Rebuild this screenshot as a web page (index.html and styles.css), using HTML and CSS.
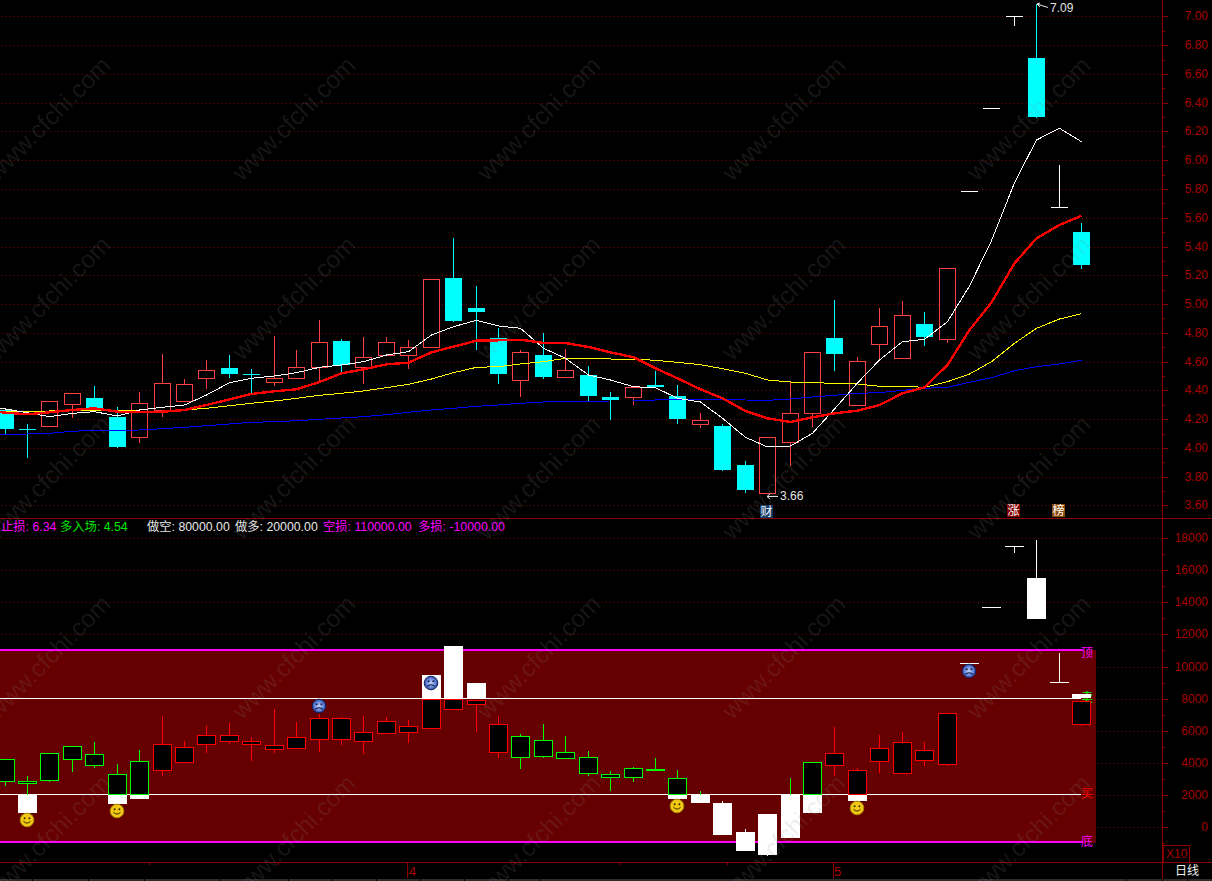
FILE: index.html
```html
<!DOCTYPE html>
<html lang="zh">
<head>
<meta charset="utf-8">
<title>K线</title>
<link rel="stylesheet" href="styles.css">
</head>
<body>
<main class="terminal">
  <section class="pane pane-main">
    <svg id="main" width="1212" height="519" viewBox="0 0 1212 519"></svg>
  </section>
  <section class="pane pane-sub">
    <svg id="sub" width="1212" height="343" viewBox="0 519 1212 343"></svg>
    <div class="info">
      <span class="item mag one">止损: 6.34</span>
      <span class="item grn two">多入场: 4.54</span>
      <span class="item wht three">做空: 80000.00</span>
      <span class="item wht four">做多: 20000.00</span>
      <span class="item mag five">空损: 110000.00</span>
      <span class="item mag six">多损: -10000.00</span>
    </div>
  </section>
  <footer class="datebar">
    <svg id="dates" width="1212" height="19" viewBox="0 862 1212 19"></svg>
  </footer>
  <svg id="mark" class="watermark" width="1212" height="881" viewBox="0 0 1212 881"></svg>
</main>
<script src="chart.js"></script>
</body>
</html>
```
FILE: styles.css
```css
* { box-sizing: border-box; }
html, body { margin: 0; padding: 0; background: #000; overflow: hidden; }
body { font-family: "Liberation Sans", "Noto Sans CJK SC", sans-serif; font-size: 12px; }
.terminal { position: relative; width: 1212px; height: 881px; display: flex; flex-direction: column; background: #000; }
.pane, .datebar { display: block; line-height: 0; }
svg { display: block; }
svg text { font-family: "Liberation Sans", "Noto Sans CJK SC", sans-serif; font-size: 12px; }

.info { position: absolute; left: 0; top: 0; display: flex; font-size: 12.3px; line-height: 14px; white-space: nowrap; padding: 1px 0 0 1px; }
.pane-sub { position: relative; }
.item.one { width: 59px; }
.item.two { width: 87px; }
.item.three { width: 88px; }
.item.four { width: 88px; }
.item.five { width: 95px; }
.mag { color: #ff00ff; }
.grn { color: #00e800; }
.wht { color: #e8e8e8; }

.watermark { position: absolute; left: 0; top: 0; pointer-events: none; }
.watermark text { font-size: 24.6px; fill: #8c8c8c; fill-opacity: .17; text-anchor: middle; dominant-baseline: middle; }

.grid { stroke: #800000; stroke-width: 1; stroke-dasharray: 1 3; fill: none; shape-rendering: crispEdges; }
.axis { stroke: #8c0000; stroke-width: 1; fill: none; shape-rendering: crispEdges; }
.axis-fill { fill: #8c0000; }
.axis-label { fill: #a80000; text-anchor: end; }
svg text.date { fill: #a80000; font-size: 13px; }
.x10-box { fill: none; stroke: #8c0000; stroke-width: 1; shape-rendering: crispEdges; }
.x10 { fill: #a80000; }
.day { fill: #f0f0f0; }
.strip { fill: #2c2c2c; }
.strip-sep { fill: #000; }

.wick-up { stroke: #ff4040; stroke-width: 1; shape-rendering: crispEdges; }
.body-up { fill: #000; stroke: #ff4040; stroke-width: 1; shape-rendering: crispEdges; }
.wick-dn { stroke: #00ffff; stroke-width: 1; shape-rendering: crispEdges; }
.body-dn { fill: #00ffff; shape-rendering: crispEdges; }
.wick-wht { stroke: #fff; stroke-width: 1; shape-rendering: crispEdges; }

.sub-red { stroke: #ff0000; stroke-width: 1; shape-rendering: crispEdges; }
.sub-red-body { fill: #000; stroke: #ff0000; stroke-width: 1; shape-rendering: crispEdges; }
.sub-grn { stroke: #00ff00; stroke-width: 1; shape-rendering: crispEdges; }
.sub-grn-body { fill: #000; stroke: #00ff00; stroke-width: 1; shape-rendering: crispEdges; }
.sub-wht { fill: #fff; shape-rendering: crispEdges; }

.ma { fill: none; stroke-linejoin: round; shape-rendering: crispEdges; }
.ma-white { stroke: #fff; stroke-width: 1; }
.ma-yellow { stroke: #ffff00; stroke-width: 1; }
.ma-blue { stroke: #0000ff; stroke-width: 1; }
.ma-red { stroke: #ff0000; stroke-width: 2.4; }

.price-tag { fill: #e4e4e4; }
.price-arrow { stroke: #e4e4e4; stroke-width: 1; fill: none; }

.flag-bg-blue { fill: #0e3a66; }
.flag-bg-red { fill: #840000; }
.flag-bg-orange { fill: #8a4a08; }
.flag-text { fill: #fff; text-anchor: middle; }

.band { fill: #660000; shape-rendering: crispEdges; }
.band-edge { fill: #ff00ff; shape-rendering: crispEdges; }
.band-mid { fill: #fff; shape-rendering: crispEdges; }
.band-label { text-anchor: middle; }
.l-mag { fill: #ff00ff; }
.l-red { fill: #ff0000; }
.l-grn { fill: #00ff00; }

.face-y { fill: #f2c814; stroke: #a88a08; stroke-width: 1; }
.face-b { fill: url(#blueface); stroke: #14245c; stroke-width: 1; }
.face-line { fill: none; stroke: #3a2c00; stroke-width: 1; }
.face-line-b { fill: none; stroke: #0c1a44; stroke-width: 1.1; }
.face-eye { fill: #3a2c00; }
.face-eye-b { fill: #0c1a44; }
```
FILE: chart.js
```js
var cols = [5,27,49,72,94,117,139,162,184,206,229,251,274,296,319,341,363,386,408,431,453,476,498,520,543,565,588,610,633,655,677,700,722,745,767,790,812,834,857,879,902,924,947,969,991,1014,1036,1059,1081];

// type, high, body top, body bottom, low
var upper = [
['d',410,410,428.7,432.7],['d',423,429,429.5,457],['u',401,401,426,426],['u',392,393,404,417],
['d',385,398,407.7,410],['d',406,417,446.7,446.7],['u',391,403,437,442],['u',353,383,410,416],
['u',378,384,400.5,400.5],['u',359,370,378,388],['d',354,368,373.7,377],['d',368,374,375,393],
['u',335,377.5,381.5,385],['u',349,367,378,378],['u',319,342,367,382],['d',338,341,365,372],
['u',336,357,367,383],['u',336,342,355,355],['u',339,347,354.5,368],['u',279,279,347,347],
['d',237,278,320.7,320.7],['d',285,308,312,349],['d',327,338,373.7,383],['u',349,352,380,396],
['d',332,355,376.7,378],['u',348,370,377,377],['d',365,375,395.7,400],['d',391,397,400,419],
['u',387,387,397,404],['d',370,385,387,387],['d',384,396,418.7,423],['u',412,420,424,427],
['d',423,426,469.7,469.7],['d',460,465,489.7,492],['u',437,437,493,493],['u',381,413,442,465],
['u',352,352,413,425.5],['d',299,338,353.7,370],['u',356,361,404.5,404.5],['u',307,326,344,360],
['u',300,315,358,358],['d',311,324,336.7,345],['u',268,268,339,341.7],
['w',191,191,191,191],['w',108,108,108,108],['w',16,16,16,25],
['d',3,58,116.7,116.7],['w',164,207,207,207],['d',222,232,264.7,268]
];

var white = [408,409,412.7,416.7,413.3,411.7,416,410,407.3,405,395,382.7,378.3,376,372.7,367.3,365,361.7,355,351.7,335,326.7,320.3,326,328.3,348.3,358.3,375,380,386.7,387.7,398.3,402,418.3,437.3,447,446,433.3,409,383,360,341.7,339.3,321.7,286,240.7,182.7,140,128.3,141.7];
var red = [412,412.7,414.3,412.3,410,408.3,411.7,412.3,411.7,410,405,399.3,394,391.3,389.3,382,373.3,369.3,364.3,362.7,352.3,346.7,340.7,340.3,339.7,343,343,347,352.3,357.3,368.3,378.3,389.3,398.3,411,418.3,422,417.3,413.3,410.7,405,393.3,387.3,365,330,302.5,263.3,238.3,225,215.7];
var yellow = [411.5,411.5,411.7,411,410.5,410.3,410.3,411,411,410,408.3,405.7,403.3,401,398.3,395.3,393.3,391,387.7,384.3,379,372.7,367.3,366.7,364,361.7,358.3,358.3,359,359,360.3,362.3,364.7,368.7,373.3,380,382,382.7,383.3,384,386.3,386.3,387.3,381.7,374,361.7,343.3,328.3,319,313.7];
var blue = [434.3,434.3,434,433.3,431.3,430.3,430.3,430,428.7,427.3,425.7,424,422.3,421.7,420.7,419.3,418,416.7,414.7,412.3,410,408.3,406.3,405,403.3,402,401.3,401.3,401,401,400,399.7,399.3,399.3,400,400.3,399,397,395.3,393.3,392.7,390.3,388.3,387.3,382.3,377.7,370.7,366.7,364,360.3];

// colour, high, body top, body bottom, low; white block top/bottom
var lower = [
['g',759,759,780.5,785],['g',775,781,783,794],['g',753,753,779.5,781],['g',745,746,758.5,771],
['g',741,754,764.5,767],['g',763,774,794,794],['g',749,761,794,794],['r',715,744,769.5,775],
['r',740,747,761.5,761.5],['r',725,735,743.5,752],['r',722,735,740.5,743],['r',736,741,743.5,760],
['r',708,745,748.5,752],['r',721,737,747.5,747.5],['r',713,718,738.5,751],['r',716,718,738.5,744],
['r',715,732,740.5,753],['r',716,721,732.5,732.5],['r',719,726,731.5,742],['r',699,699,727.5,727.5],
['r',699,699,708.5,708.5],['r',699,700,703.5,731],['r',715,724,751.5,757],['g',733,736,756.5,768],
['g',723,740,755.5,757],['g',735,752,757.5,757.5],['g',750,757,772.5,775],['g',770,774,776.5,790],
['g',766,768,776.5,781],['g',757,769,770,770],['g',769,778,794,794],['g',791,794,794,794],
null,null,null,['g',777,794,794,794],['g',762,762,794,794],['r',726,753,764.5,775],
['r',767,770,794,794],['r',734,748,760.5,772],['r',731,742,772.5,772.5],['r',741,750,759.5,765],
['r',713,713,763.5,765],null,null,null,null,null,['r',701,701,723.5,725]
];
var blocks = [
[1,795,812.7],[5,795,803.7],[6,795,798.7],[19,675,698],[20,646,698],[21,683,698],
[30,795,799],[31,795,803],[32,803,835],[33,832,851],[34,814,855],[35,795,838],[36,795,813],
[38,795,800.7],[46,578,618.7],[48,694,698]
];

function grid(y, x2) {
  return '<line class="grid" x1="2" x2="' + x2 + '" y1="' + (Math.round(y) + .5) + '" y2="' + (Math.round(y) + .5) + '"/>';
}
function vline(cls, x, y1, y2) { return '<line class="' + cls + '" x1="' + x + '" x2="' + x + '" y1="' + y1 + '" y2="' + y2 + '"/>'; }
function hline(cls, x1, x2, y) { return '<line class="' + cls + '" x1="' + x1 + '" x2="' + x2 + '" y1="' + y + '" y2="' + y + '"/>'; }
function snap(v) { return Math.round(v) + .5; }
function poly(cls, ys) {
  var pts = ['0,' + ys[0]];
  for (var i = 0; i < cols.length; i++) pts.push((cols[i] + .5) + ',' + ys[i + 1]);
  return '<polyline class="ma ' + cls + '" points="' + pts.join(' ') + '"/>';
}
function axis(labels, y0, step, from, to) {
  var s = vline('axis', 1162.5, from, to);
  labels.forEach(function (t, k) {
    var y = y0 + step * k;
    s += hline('axis', 1163, 1168, snap(y));
    if (snapOk(y + step / 2, from, to)) s += hline('axis', 1163, 1165, snap(y + step / 2));
    s += '<text class="axis-label" x="1208" y="' + (y + 4) + '">' + t + '</text>';
  });
  return s;
}
function snapOk(y, a, b) { return y > a && y < b; }

/* upper pane */
(function () {
  var s = '', labels = ['7.00','6.80','6.60','6.40','6.20','6.00','5.80','5.60','5.40','5.20','5.00','4.80','4.60','4.40','4.20','4.00','3.80','3.60'];
  labels.forEach(function (t, k) { s += grid(16.4 + 28.77 * k, 1161); });
  s += axis(labels, 16.4, 28.77, 0, 519);
  upper.forEach(function (c, i) {
    var x = cols[i] + .5, t = c[0];
    if (t === 'w') {
      if (c[4] !== c[1]) s += vline('wick-wht', x, snap(c[1]), snap(c[4]));
      s += hline('wick-wht', x - 8.5, x + 8.5, snap(c[2]));
      return;
    }
    if (t === 'u') {
      s += vline('wick-up', x, snap(c[1]), snap(c[4]));
      s += '<rect class="body-up" x="' + (x - 8) + '" y="' + snap(c[2]) + '" width="16" height="' + Math.max(1, Math.round(c[3] - c[2])) + '"/>';
    } else {
      s += vline('wick-dn', x, snap(c[1]), snap(c[4]));
      s += '<rect class="body-dn" x="' + (x - 8.5) + '" y="' + Math.round(c[2]) + '" width="17" height="' + Math.max(1, Math.round(c[3] - c[2])) + '"/>';
    }
  });
  s += poly('ma-blue', blue) + poly('ma-yellow', yellow) + poly('ma-white', white) + poly('ma-red', red);
  s += '<text class="price-tag" x="1050" y="12">7.09</text>';
  s += '<path class="price-arrow" d="M1037 4 L1048 7.5 M1037 4 L1040 3 M1037 4 L1040 7"/>';
  s += '<text class="price-tag" x="780" y="500">3.66</text>';
  s += '<path class="price-arrow" d="M767 496.5 H778 M767 496.5 L770 494 M767 496.5 L770 499"/>';
  s += '<rect class="flag-bg-blue" x="760" y="505" width="13" height="13"/><text class="flag-text" x="766.5" y="516">财</text>';
  s += '<rect class="flag-bg-red" x="1007" y="504" width="13" height="13"/><text class="flag-text" x="1013.5" y="515">涨</text>';
  s += '<rect class="flag-bg-orange" x="1052" y="504" width="13" height="13"/><text class="flag-text" x="1058.5" y="515">榜</text>';
  s += '<rect class="axis-fill" x="0" y="518" width="1212" height="1"/>';
  document.getElementById('main').innerHTML = s;
})();

function face(kind, x, y) {
  if (kind === 'y') {
    return '<g transform="translate(' + x + ' ' + y + ')"><circle class="face-y" r="6.8"/><circle class="face-eye" cx="-2.4" cy="-1.8" r="1"/><circle class="face-eye" cx="2.4" cy="-1.8" r="1"/><path class="face-line" d="M-3.6 1.2 Q0 5 3.6 1.2"/></g>';
  }
  return '<g transform="translate(' + x + ' ' + y + ')"><circle class="face-b" r="6.8"/><circle class="face-eye-b" cx="-2.4" cy="-1.8" r="1"/><circle class="face-eye-b" cx="2.4" cy="-1.8" r="1"/><path class="face-line-b" d="M-4 3.4 Q0 0 4 3.4"/></g>';
}

/* lower pane */
(function () {
  var s = '<defs><radialGradient id="blueface"><stop offset="0" stop-color="#c4d4f6"/><stop offset=".6" stop-color="#6e8ee0"/><stop offset="1" stop-color="#27409c"/></radialGradient></defs>';
  var labels = ['18000','16000','14000','12000','10000','8000','6000','4000','2000','0'];
  labels.forEach(function (t, k) { s += grid(538.3 + 32.05 * k, 1161); });
  s += axis(labels, 538.3, 32.05, 519, 862);
  s += '<rect class="band" x="0" y="650" width="1096" height="193"/>';
  s += '<rect class="band-mid" x="0" y="698" width="1081" height="1"/>';
  s += '<rect class="band-mid" x="0" y="794" width="1081" height="1"/>';
  s += '<rect class="band-edge" x="0" y="649" width="1083" height="2"/>';
  s += '<rect class="band-edge" x="0" y="841" width="1083" height="2"/>';
  s += '<text class="band-label l-mag" x="1087" y="657">顶</text>';
  s += '<text class="band-label l-grn" x="1087" y="702">卖</text>';
  s += '<text class="band-label l-red" x="1087" y="798">买</text>';
  s += '<text class="band-label l-mag" x="1087" y="846">底</text>';
  lower.forEach(function (c, i) {
    if (!c) return;
    var x = cols[i] + .5, w = c[0] === 'g' ? 'sub-grn' : 'sub-red', b = w + '-body';
    s += vline(w, x, snap(c[1]), snap(c[4]));
    if (i !== 31 && i !== 35) {
      s += '<rect class="' + b + '" x="' + (x - 9) + '" y="' + snap(c[2]) + '" width="18" height="' + Math.max(1, Math.round(c[3] - c[2])) + '"/>';
    }
  });
  s += '<line class="sub-grn" x1="700.5" x2="700.5" y1="791" y2="795"/>';
  blocks.forEach(function (r) {
    s += '<rect class="sub-wht" x="' + (cols[r[0]] - 9) + '" y="' + r[1] + '" width="19" height="' + (r[2] - r[1]) + '"/>';
  });
  // flat white bars and thin wicks
  [[43,663],[44,607],[47,682],[45,546]].forEach(function (p) {
    s += hline('wick-wht', cols[p[0]] - 9, cols[p[0]] + 10, snap(p[1]));
  });
  s += vline('wick-wht', 1014.5, 547, 553);
  s += vline('wick-wht', 1036.5, 540, 578);
  s += vline('wick-wht', 1059.5, 653, 682);
  s += vline('wick-wht', 722.5, 801, 803);
  s += vline('wick-wht', 745.5, 829, 832);
  s += vline('wick-wht', 767.5, 855, 856);
  [[27,820],[117,811],[677,806],[857,808]].forEach(function (p) { s += face('y', p[0], p[1]); });
  [[319,706],[431,683],[969,671]].forEach(function (p) { s += face('b', p[0], p[1]); });
  s += '<rect class="x10-box" x="1163.5" y="845.5" width="26" height="17"/><text class="x10" x="1166" y="858">X10</text>';
  document.getElementById('sub').innerHTML = s;
})();

/* date bar */
(function () {
  var s = '<rect class="axis-fill" x="0" y="862" width="1212" height="1"/>';
  [20,149,278,514,620,727].forEach(function (x) { s += vline('axis', x + .5, 863, 865); });
  s += vline('axis', 407.5, 863, 878) + vline('axis', 833.5, 863, 878) + vline('axis', 1162.5, 863, 879);
  s += '<text class="date" x="409" y="876">4</text><text class="date" x="834" y="876">5</text>';
  s += '<text class="day" x="1175" y="875">日线</text>';
  s += '<rect class="strip" x="0" y="879" width="1212" height="2"/>';
  [32,88,144,220,288,332,376,420,464,508,540,1126,1162,1187].forEach(function (x) {
    s += '<rect class="strip-sep" x="' + x + '" y="879" width="1" height="2"/>';
  });
  document.getElementById('dates').innerHTML = s;
})();

/* watermark */
(function () {
  var s = '';
  for (var r = 0; r < 5; r++) {
    for (var c = 0; c < 5; c++) {
      var x = 50 + 245 * c, y = 120 + 179.5 * r;
      s += '<text x="' + x + '" y="' + y + '" transform="rotate(-45 ' + x + ' ' + y + ')">www.cfchi.com</text>';
    }
  }
  document.getElementById('mark').innerHTML = s;
})();
```
